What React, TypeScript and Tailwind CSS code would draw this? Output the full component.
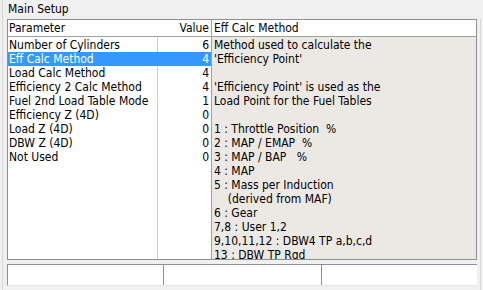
import React from "react";

const rows: [string, string][] = [
  ["Number of Cylinders", "6"],
  ["Eff Calc Method", "4"],
  ["Load Calc Method", "4"],
  ["Efficiency 2 Calc Method", "4"],
  ["Fuel 2nd Load Table Mode", "1"],
  ["Efficiency Z (4D)", "0"],
  ["Load Z (4D)", "0"],
  ["DBW Z (4D)", "0"],
  ["Not Used", "0"],
];

const desc: string[] = [
  "Method used to calculate the",
  "'Efficiency Point'",
  "",
  "'Efficiency Point' is used as the",
  "Load Point for the Fuel Tables",
  "",
  "1 : Throttle Position  %",
  "2 : MAP / EMAP  %",
  "3 : MAP / BAP   %",
  "4 : MAP",
  "5 : Mass per Induction",
  "    (derived from MAF)",
  "6 : Gear",
  "7,8 : User 1,2",
  "9,10,11,12 : DBW4 TP a,b,c,d",
  "13 : DBW TP Rqd",
];

export default function App() {
  return (
    <div
      className="w-[483px] h-[290px] bg-[#f0f0f0] text-[12px] text-black overflow-hidden flex flex-col"
      style={{ fontFamily: '"DejaVu Sans Condensed", "DejaVu Sans", sans-serif' }}
    >
      <div className="h-[19px] pl-[5px] pt-[2px] leading-[14px] border-l border-[#d4d4d4] ml-[2px]">
        Main Setup
      </div>
      <div className="flex-1 flex flex-col ml-[2px] mr-[2px] border-l border-r border-[#d8d8d8] pl-[4px] pr-[3px]">
        <div className="w-[470px] h-[241px] border border-[#8f8f8f] bg-white flex flex-col overflow-hidden">
          <div className="h-[17px] flex border-b border-[#a0a0a0] leading-[16px] shrink-0">
            <div className="w-[150px] pl-[1px]">Parameter</div>
            <div className="w-[53px] text-right pr-[2px]">Value</div>
            <div className="flex-1 border-l border-[#a0a0a0] pl-[2px]">Eff Calc Method</div>
          </div>
          <div className="flex-1 flex min-h-0">
            <div className="w-[203px] pt-[1px] flex flex-col relative">
              <div className="absolute left-[149px] top-0 bottom-0 w-px bg-[#d0d0d0]" />
              {rows.map(([p, v], i) => (
                <div
                  key={p}
                  className={
                    "h-[14px] flex leading-[14px] relative " +
                    (i === 1 ? "bg-[#3399ff] text-white" : "")
                  }
                >
                  <div className="w-[150px] pl-[1px] whitespace-nowrap">{p}</div>
                  <div className="w-[53px] text-right pr-[2px]">{v}</div>
                </div>
              ))}
            </div>
            <div className="flex-1 bg-[#ece9e5] border-l border-[#a0a0a0] pt-[1px] pl-[2px] overflow-hidden">
              {desc.map((d, i) => (
                <div key={i} className="h-[14px] leading-[14px] whitespace-pre">
                  {d}
                </div>
              ))}
            </div>
          </div>
        </div>
        <div className="h-[4px]" />
        <div className="w-[470px] h-[22px] flex border-t border-l border-[#8f8f8f] border-b border-b-[#e8e8e8] bg-white">
          <div className="w-[156px] border-r border-[#8f8f8f]" />
          <div className="w-[158px] border-r border-[#8f8f8f]" />
          <div className="flex-1" />
        </div>
      </div>
    </div>
  );
}
